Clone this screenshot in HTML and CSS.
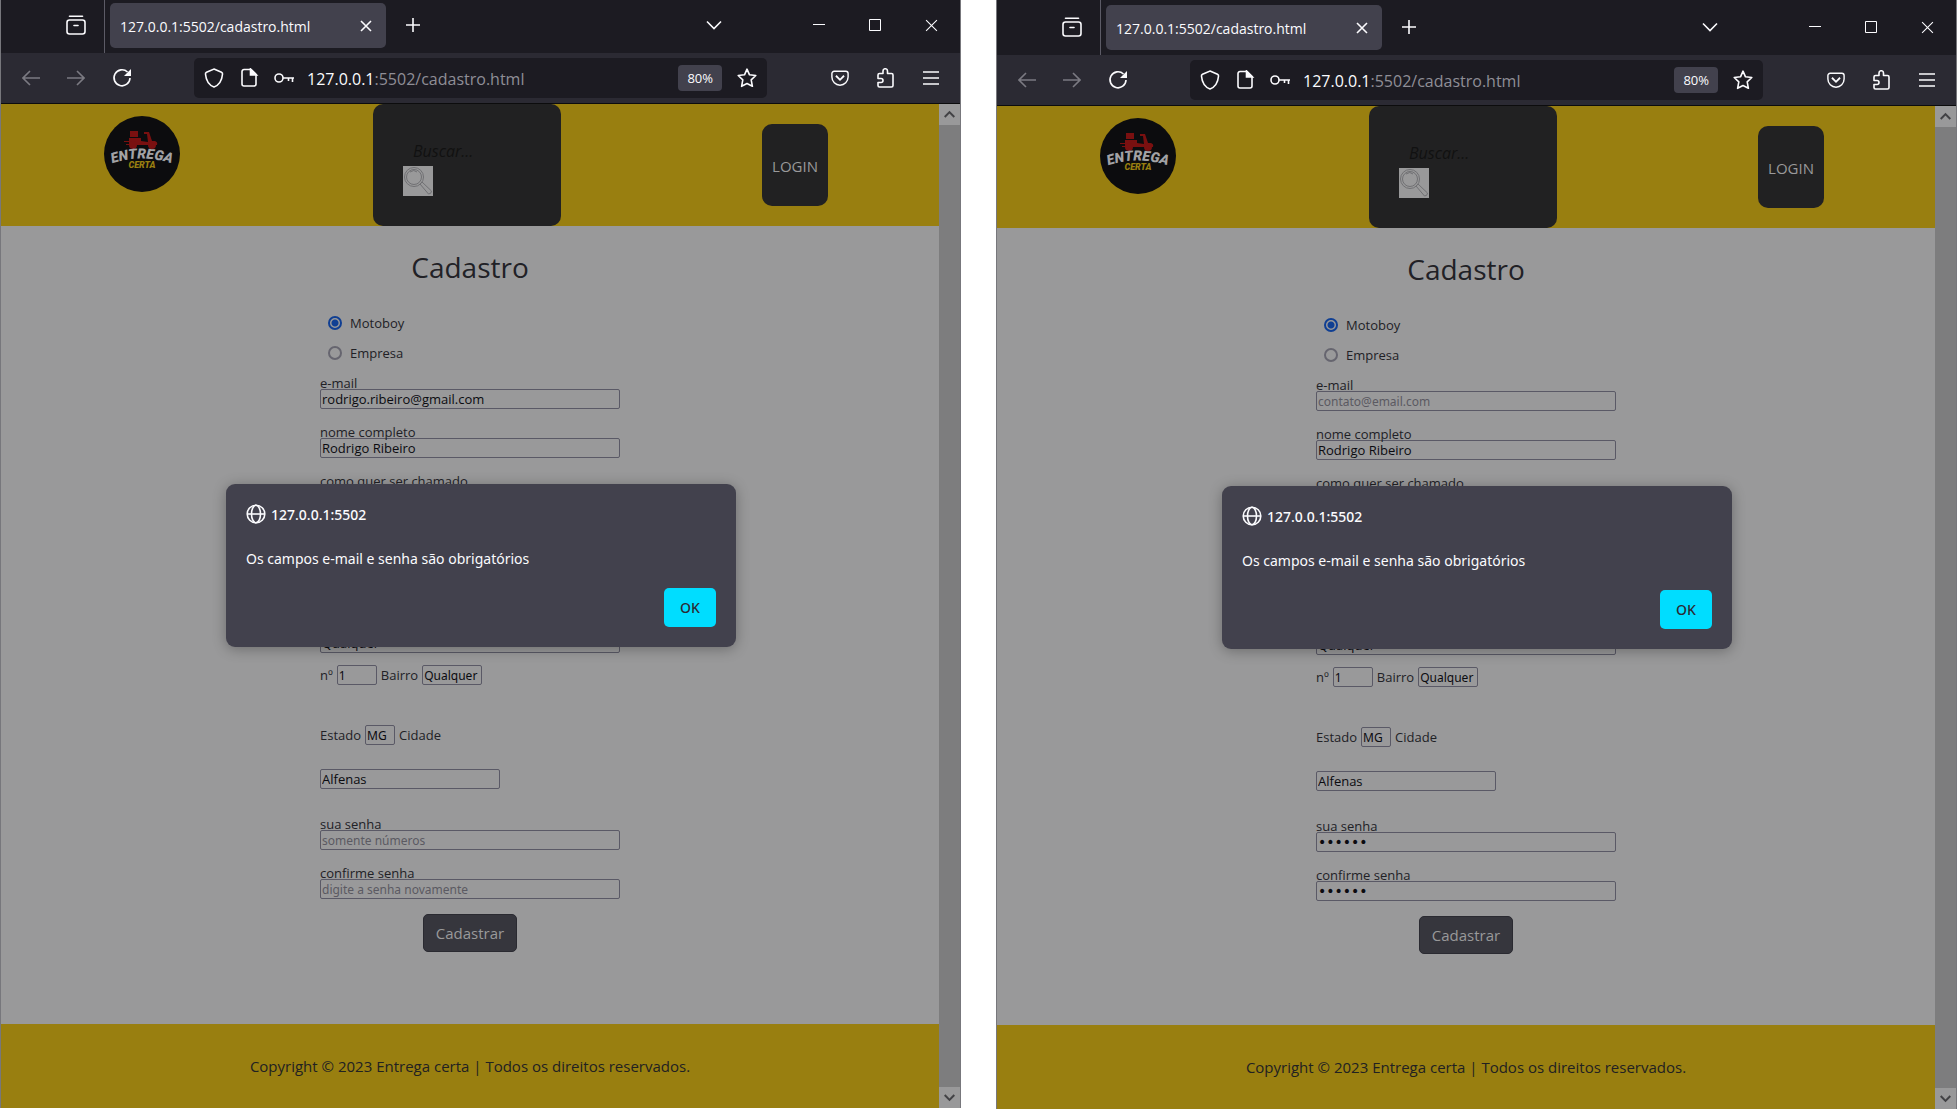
FILE: index.html
```html
<!DOCTYPE html>
<html lang="pt-BR"><head><meta charset="utf-8"><title>Cadastro</title><link rel="stylesheet" href="styles.css"></head>
<body>
<svg class="defs" aria-hidden="true">
<symbol id="archive" viewBox="0 0 20 20"><path d="M3.5 1.2h13" stroke-linecap="round"/><rect x="1" y="5" width="18" height="14" rx="2.5"/><path d="M8 10.500h4" stroke-linecap="round"/></symbol>
<symbol id="close" viewBox="0 0 12 12"><path d="M1 1l10 10M11 1L1 11"/></symbol>
<symbol id="plus" viewBox="0 0 16 16"><path d="M8 1v14M1 8h14"/></symbol>
<symbol id="chevron" viewBox="0 0 16 10"><path d="M1 1.500l7 7 7-7"/></symbol>
<symbol id="minimize" viewBox="0 0 12 12"><path d="M0 5.500h12"/></symbol>
<symbol id="maximize" viewBox="0 0 12 12"><path d="M.5.5h11v11H.5z"/></symbol>
<symbol id="back" viewBox="0 0 18 16"><path d="M18 8H1M8 1L1 8l7 7"/></symbol>
<symbol id="forward" viewBox="0 0 18 16"><path d="M0 8h17M10 1l7 7-7 7"/></symbol>
<symbol id="reload" viewBox="0 0 20 20"><path d="M18 10a8 8 0 1 1-2.500-6"/><path d="M19 1v7h-7z" fill="currentColor" stroke="none"/></symbol>
<symbol id="shield" viewBox="0 0 20 20"><path d="M10 1l7.500 3.200c1 .5 1.200 1.200 1 2C18 12 15 17 10 19 5 17 2 12 1.500 6.200c-.2-.8 0-1.500 1-2z"/></symbol>
<symbol id="page" viewBox="0 0 16 20"><path d="M3 1.500h7l5 5V16a2 2 0 0 1-2 2H3a2 2 0 0 1-2-2V3.500a2 2 0 0 1 2-2z"/><path d="M9.500 1l6 6h-6z" fill="currentColor"/></symbol>
<symbol id="key" viewBox="0 0 20 12"><circle cx="5" cy="6" r="4"/><path d="M9 6h11M18.500 6v4M14.500 6v3"/></symbol>
<symbol id="star" viewBox="0 0 20 20"><path d="M10 1.200l2.500 5.600 6.300.7-4.600 4.300 1.200 6.500L10 15.500l-5.400 2.800 1.200-6.500L1.200 7.500l6.300-.7z" stroke-linejoin="round"/></symbol>
<symbol id="pocket" viewBox="0 0 20 18"><path d="M3.500 1.500h13A2.500 2.500 0 0 1 19 4v4a9 9 0 0 1-18 0V4a2.500 2.500 0 0 1 2.500-2.500z"/><path d="M5.500 6.500L10 11l4.500-4.500" stroke-width="2"/></symbol>
<symbol id="puzzle" viewBox="0 0 20 20"><path d="M2 10.500V7a1.500 1.500 0 0 1 1.500-1.500H7V3a2 2 0 0 1 4.500 0v2.500h4A1.500 1.500 0 0 1 17 7v10.500a1.500 1.500 0 0 1-1.500 1.500h-12A1.500 1.500 0 0 1 2 17.500V14.500h3a2 2 0 0 0 0-4z" stroke-linejoin="round"/></symbol>
<symbol id="menu" viewBox="0 0 16 14"><path d="M0 1h16M0 7h16M0 13h16"/></symbol>
<symbol id="globe" viewBox="0 0 20 20"><circle cx="10" cy="10" r="8.800"/><ellipse cx="10" cy="10" rx="4.500" ry="8.800"/><path d="M1 10h18"/></symbol>
<symbol id="magnifier" viewBox="0 0 30 30"><circle cx="11" cy="11" r="9.500"/><circle cx="11" cy="11" r="7.500"/><path d="M7 6q4-3 7 0M17 18l2-2 9.500 9q0 3-3 3z"/></symbol>
<symbol id="scooter" viewBox="0 0 34 20"><path d="M6 1h8v6H6z"/><path d="M5 8h12v3l7 1-1-8h-3V2h5l3 9h3q3 1 2 4H5z"/><circle cx="9" cy="15" r="4"/><circle cx="28" cy="15" r="4"/><path d="M0 11h5v1H0zM2 14h4v1H2z"/></symbol>
</svg>
<main class="compare">
<section class="window">
 <div class="tabbar"><div class="archive"><svg class="i20"><use href="#archive"/></svg></div><div class="tab"><span>127.0.0.1:5502/cadastro.html</span><svg class="i12"><use href="#close"/></svg></div><svg class="i16 new-tab"><use href="#plus"/></svg><svg class="i16 tab-list"><use href="#chevron"/></svg><div class="controls"><svg class="i12"><use href="#minimize"/></svg><svg class="i12"><use href="#maximize"/></svg><svg class="i13"><use href="#close"/></svg></div></div>
 <div class="toolbar"><div class="nav"><svg class="i18 dim"><use href="#back"/></svg><svg class="i18 dim"><use href="#forward"/></svg><svg class="i20"><use href="#reload"/></svg></div><div class="url"><svg class="i20"><use href="#shield"/></svg><svg class="i20"><use href="#page"/></svg><svg class="i20"><use href="#key"/></svg><span class="address"><b>127.0.0.1</b>:5502/cadastro.html</span><span class="zoom">80%</span><svg class="i20"><use href="#star"/></svg></div><div class="tools"><svg class="i18"><use href="#pocket"/></svg><svg class="i20"><use href="#puzzle"/></svg><svg class="i16"><use href="#menu"/></svg></div></div>
 <div class="viewport"><div class="page">
  <header class="site-header"><div class="brand"><svg class="logo" viewBox="0 0 76 76"><circle cx="38" cy="38" r="38"/><use href="#scooter" class="scooter" x="20" y="14" width="34" height="20"/><path id="arc-a" d="M4 49Q38 36 72 49" fill="none"/><text class="logo-name"><textPath href="#arc-a" startOffset="50%" text-anchor="middle">ENTREGA</textPath></text><text class="logo-sub" x="38" y="52" text-anchor="middle">CERTA</text></svg></div><div class="search"><input type="search" placeholder="Buscar..." aria-label="Buscar"><button type="button" aria-label="Pesquisar"><svg><use href="#magnifier"/></svg></button></div><div class="account"><button type="button" class="login">LOGIN</button></div></header>
  <form class="form"><h1>Cadastro</h1>
   <div class="radios"><label><input type="radio" name="tipo-a" checked>Motoboy</label><label><input type="radio" name="tipo-a">Empresa</label></div>
   <div class="field"><label for="a1">e-mail</label><input id="a1" type="email" value="rodrigo.ribeiro@gmail.com"></div>
   <div class="field"><label for="a2">nome completo</label><input id="a2" value="Rodrigo Ribeiro"></div>
   <div class="field"><label for="a3">como quer ser chamado</label><input id="a3"></div>
   <div class="field street"><label for="a4">endereço</label><input id="a4" value="Qualquer"></div>
   <div class="line"><label for="a5">nº</label><input id="a5" class="number" value="1"><label for="a6">Bairro</label><input id="a6" class="district" value="Qualquer"></div>
   <div class="line state"><label for="a7">Estado</label><input id="a7" class="uf" value="MG"><label for="a8">Cidade</label></div>
   <input id="a8" class="city" value="Alfenas">
   <div class="field"><label for="a9">sua senha</label><input id="a9" type="password" placeholder="somente números"></div>
   <div class="field"><label for="a10">confirme senha</label><input id="a10" type="password" placeholder="digite a senha novamente"></div>
   <button type="button" class="submit">Cadastrar</button>
  </form>
  <footer>Copyright © 2023 Entrega certa | Todos os direitos reservados.</footer></div>
  <div class="scrollbar"><svg class="up"><use href="#chevron"/></svg><svg><use href="#chevron"/></svg></div>
  <div class="dialog" role="alertdialog" aria-label="127.0.0.1:5502"><div class="origin"><svg class="i20"><use href="#globe"/></svg>127.0.0.1:5502</div><p>Os campos e-mail e senha são obrigatórios</p><button type="button">OK</button></div>
 </div>
</section>
<section class="window second">
 <div class="tabbar"><div class="archive"><svg class="i20"><use href="#archive"/></svg></div><div class="tab"><span>127.0.0.1:5502/cadastro.html</span><svg class="i12"><use href="#close"/></svg></div><svg class="i16 new-tab"><use href="#plus"/></svg><svg class="i16 tab-list"><use href="#chevron"/></svg><div class="controls"><svg class="i12"><use href="#minimize"/></svg><svg class="i12"><use href="#maximize"/></svg><svg class="i13"><use href="#close"/></svg></div></div>
 <div class="toolbar"><div class="nav"><svg class="i18 dim"><use href="#back"/></svg><svg class="i18 dim"><use href="#forward"/></svg><svg class="i20"><use href="#reload"/></svg></div><div class="url"><svg class="i20"><use href="#shield"/></svg><svg class="i20"><use href="#page"/></svg><svg class="i20"><use href="#key"/></svg><span class="address"><b>127.0.0.1</b>:5502/cadastro.html</span><span class="zoom">80%</span><svg class="i20"><use href="#star"/></svg></div><div class="tools"><svg class="i18"><use href="#pocket"/></svg><svg class="i20"><use href="#puzzle"/></svg><svg class="i16"><use href="#menu"/></svg></div></div>
 <div class="viewport"><div class="page">
  <header class="site-header"><div class="brand"><svg class="logo" viewBox="0 0 76 76"><circle cx="38" cy="38" r="38"/><use href="#scooter" class="scooter" x="20" y="14" width="34" height="20"/><path id="arc-b" d="M4 49Q38 36 72 49" fill="none"/><text class="logo-name"><textPath href="#arc-b" startOffset="50%" text-anchor="middle">ENTREGA</textPath></text><text class="logo-sub" x="38" y="52" text-anchor="middle">CERTA</text></svg></div><div class="search"><input type="search" placeholder="Buscar..." aria-label="Buscar"><button type="button" aria-label="Pesquisar"><svg><use href="#magnifier"/></svg></button></div><div class="account"><button type="button" class="login">LOGIN</button></div></header>
  <form class="form"><h1>Cadastro</h1>
   <div class="radios"><label><input type="radio" name="tipo-b" checked>Motoboy</label><label><input type="radio" name="tipo-b">Empresa</label></div>
   <div class="field"><label for="b1">e-mail</label><input id="b1" type="email" placeholder="contato@email.com"></div>
   <div class="field"><label for="b2">nome completo</label><input id="b2" value="Rodrigo Ribeiro"></div>
   <div class="field"><label for="b3">como quer ser chamado</label><input id="b3"></div>
   <div class="field street"><label for="b4">endereço</label><input id="b4" value="Qualquer"></div>
   <div class="line"><label for="b5">nº</label><input id="b5" class="number" value="1"><label for="b6">Bairro</label><input id="b6" class="district" value="Qualquer"></div>
   <div class="line state"><label for="b7">Estado</label><input id="b7" class="uf" value="MG"><label for="b8">Cidade</label></div>
   <input id="b8" class="city" value="Alfenas">
   <div class="field"><label for="b9">sua senha</label><input id="b9" type="password" value="123456"></div>
   <div class="field"><label for="b10">confirme senha</label><input id="b10" type="password" value="123456"></div>
   <button type="button" class="submit">Cadastrar</button>
  </form>
  <footer>Copyright © 2023 Entrega certa | Todos os direitos reservados.</footer></div>
  <div class="scrollbar"><svg class="up"><use href="#chevron"/></svg><svg><use href="#chevron"/></svg></div>
  <div class="dialog" role="alertdialog" aria-label="127.0.0.1:5502"><div class="origin"><svg class="i20"><use href="#globe"/></svg>127.0.0.1:5502</div><p>Os campos e-mail e senha são obrigatórios</p><button type="button">OK</button></div>
 </div>
</section>
</main>
</body></html>
```
FILE: styles.css
```css
* { box-sizing: border-box; }
body { margin: 0; background: #fff; font-family: "Open Sans", "Noto Sans", sans-serif; }
button, input { font-family: inherit; }
svg { fill: none; stroke: currentColor; stroke-width: 1.6; flex: none; }
.defs { position: absolute; width: 0; height: 0; }
.compare { display: grid; grid-template-columns: 1fr 1fr; gap: 35px; align-items: start; padding-right: 1px; }
.window { border-left: 1px solid #77777c; border-right: 1px solid #77777c; min-width: 0; }
.i12 { width: 12px; height: 12px; }
.i13 { width: 13px; height: 13px; }
.i16 { width: 16px; height: 16px; }
.i18 { width: 18px; height: 18px; }
.i20 { width: 20px; height: 20px; }
.tabbar { height: 53px; background: #1c1b22; color: #fbfbfe; display: flex; align-items: center; padding: 0 22px 3px 0; }
.second .tabbar { height: 55px; padding-bottom: 1px; }
.archive { align-self: stretch; width: 104px; margin-bottom: -3px; padding: 0 18px 3px 0; border-right: 1px solid #5c5b66; display: flex; align-items: center; justify-content: flex-end; }
.second .archive { margin-bottom: -1px; padding-bottom: 1px; }
.tab { width: 276px; height: 45px; margin-left: 5px; padding: 2px 14px 0 10px; border-radius: 5px; background: #42414d; display: flex; align-items: center; justify-content: space-between; font-size: 14px; }
.new-tab { margin-left: 19px; }
.tab-list { margin-left: auto; }
.controls { display: flex; gap: 44px; margin-left: 91px; }
.controls svg { stroke-width: 1; }
.toolbar { height: 51px; background: #2b2a33; border-bottom: 1px solid #0c0c0d; color: #fbfbfe; display: flex; align-items: center; }
.nav { width: 193px; display: flex; gap: 27px; padding-left: 21px; align-items: center; }
.dim { color: #7b7a82; }
.url { flex: 1; height: 40px; border-radius: 5px; background: #1c1b22; display: flex; align-items: center; gap: 15px; padding: 0 10px; }
.address { flex: 1; margin-left: -2px; padding-top: 2px; font-size: 16px; color: #8f8e96; white-space: nowrap; }
.address b { color: #fbfbfe; font-weight: 400; }
.zoom { background: #42414d; border-radius: 4px; font-size: 13px; line-height: 26px; padding: 0 9px; }
.tools { width: 193px; display: flex; align-items: center; justify-content: flex-end; gap: 27px; padding-right: 21px; }
.viewport { position: relative; display: flex; }
.page { flex: 1; min-width: 0; background: #99999a; }
.site-header { height: 122px; background: #997f10; display: grid; grid-template-columns: 372fr 188px 378fr; }
.brand { padding: 12px 0 0 103px; }
.logo { width: 76px; height: 76px; display: block; fill: #0c0c0e; stroke: none; }
.scooter { fill: #7a1010; }
.logo-name { font: italic 900 14px Roboto, sans-serif; fill: #a2a2a5; }
.logo-sub { font: italic 900 9px Roboto, sans-serif; fill: #997f10; }
.search { background: #212122; border-radius: 10px; padding: 32px 30px 0; display: flex; flex-direction: column; align-items: flex-start; }
.search input { width: 128px; height: 30px; padding: 0 10px; border: 0; background: none; font-size: 16px; font-style: italic; color: #111; }
.search input::placeholder { color: #111; }
.search button { width: 30px; height: 30px; padding: 0; border: 0; background: #99999a; color: #707073; }
.search svg { width: 30px; height: 30px; stroke-width: 1; }
.account { padding: 20px 111px 0 0; display: flex; justify-content: flex-end; align-items: flex-start; }
.login { width: 66px; height: 82px; border: 0; border-radius: 10px; background: #212122; color: #99999a; font-size: 15px; padding: 2px 0 0; }
.form { width: 300px; margin: 0 auto; height: 798px; color: #212126; font-size: 13px; }
.second .form { height: 797px; }
h1 { margin: 0; padding-top: 19px; font-size: 28px; line-height: 44px; font-weight: 400; text-align: center; }
.radios { padding: 19px 0 1px 8px; }
.radios label { display: flex; height: 30px; align-items: center; gap: 8px; }
.radios input { appearance: none; width: 14px; height: 14px; margin: 0; border: 2px solid #66656f; border-radius: 50%; }
.radios input:checked { border-color: #103f93; background: radial-gradient(#103f93 3px, transparent 4px); }
.field { height: 49px; padding-top: 8px; }
.field label { display: block; height: 12px; line-height: 12px; }
.form input:not([type="radio"]) { display: block; width: 300px; height: 20px; border: 1px solid #5a5966; border-radius: 2px; background: #99999a; font-size: 13px; padding: 0 1px; color: #0b0b10; }
.form input::placeholder { color: #5b5a62; font-family: "Noto Sans", sans-serif; font-size: 12px; }
.form input[type="password"]:not(:placeholder-shown) { font-family: "DejaVu Sans", sans-serif; font-size: 14px; }
.street { margin-top: 97px; }
.line { display: flex; align-items: center; gap: 4px; height: 20px; margin-top: 3px; }
.form .line input:not([type="radio"]) { font-family: "Noto Sans", sans-serif; font-size: 12px; }
.form .line .number:not([type="radio"]) { width: 40px; }
.form .line .district:not([type="radio"]) { width: 60px; }
.form .line .uf:not([type="radio"]) { width: 30px; }
.state { margin-top: 40px; }
.form .city:not([type="radio"]) { width: 180px; margin: 24px 0 21px; }
.submit { display: block; width: 94px; height: 38px; margin: 6px auto 0; border: 1px solid #2a2a31; border-radius: 5px; background: #36363d; color: #99999a; font-size: 15px; padding: 0; }
footer { height: 84px; background: #997f10; color: #212122; text-align: center; font-size: 15px; line-height: 84px; }
.scrollbar { width: 21px; background: #7d7d7e; color: #424245; display: flex; flex-direction: column; justify-content: space-between; }
.scrollbar svg { width: 21px; height: 21px; padding: 5px; background: #99999a; stroke-width: 3; }
.scrollbar .up { transform: rotate(180deg); }
.dialog { position: absolute; top: 380px; left: 225px; right: 224px; height: 163px; border-radius: 9px; background: #42414d; color: #fbfbfe; box-shadow: 0 2px 14px rgba(0, 0, 0, .3); padding: 20px; font-family: "Noto Sans", sans-serif; font-size: 14px; display: flex; flex-direction: column; }
.origin { display: flex; align-items: center; gap: 5px; height: 20px; font-weight: 500; }
.dialog p { margin: 24px 0 18px; line-height: 22px; }
.dialog button { align-self: flex-end; width: 52px; height: 40px; border: 0; border-radius: 5px; background: #00ddff; color: #2b2a33; font-size: 14px; font-weight: 500; padding: 0; }
```
